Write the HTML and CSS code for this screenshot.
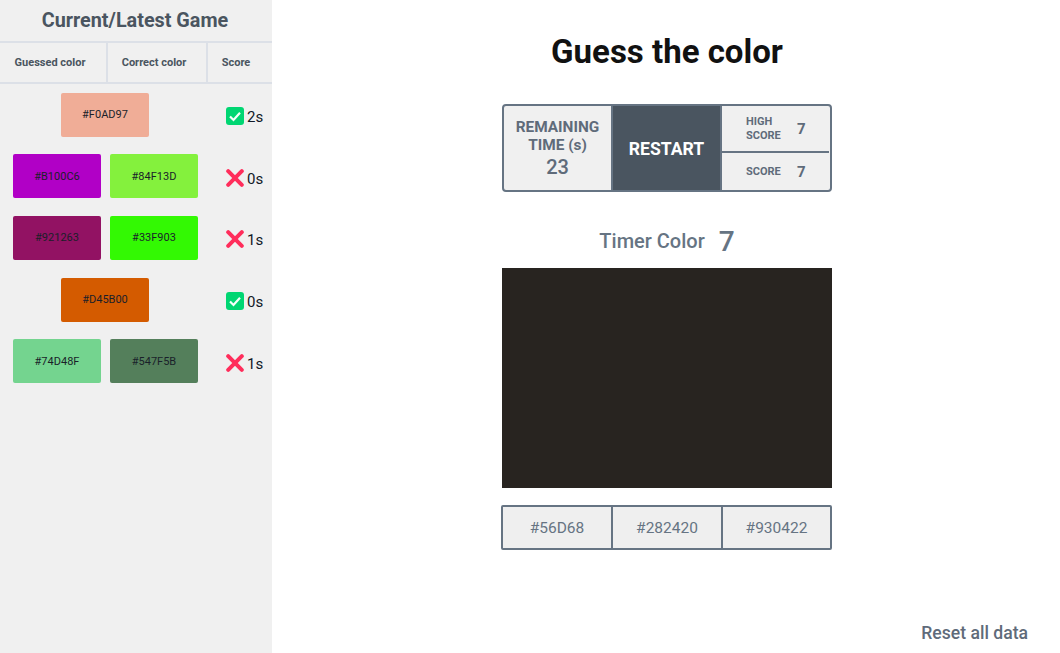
FILE: index.html
```html
<!DOCTYPE html>
<html lang="en">
<head>
<meta charset="utf-8">
<title>Guess the color</title>
<link rel="stylesheet" href="styles.css">
</head>
<body>
<div class="app">
  <aside class="sidebar">
    <h2 class="side-title">Current/Latest Game</h2>
    <div class="thead">
      <div class="th th-g">Guessed color</div>
      <div class="th th-c">Correct color</div>
      <div class="th th-s">Score</div>
    </div>
    <div class="rows">
      <div class="row">
        <div class="swatches"><div class="swatch" style="background:#F0AD97">#F0AD97</div></div>
        <div class="score"><svg class="icon" viewBox="0 0 18 18"><rect width="18" height="18" rx="3" fill="#00d672"/><path d="M4 9.5 7.5 13 14 5.8" fill="none" stroke="#f4fff9" stroke-width="2.2"/></svg><span class="secs">2s</span></div>
      </div>
      <div class="row">
        <div class="swatches"><div class="swatch" style="background:#B100C6">#B100C6</div><div class="swatch" style="background:#84F13D">#84F13D</div></div>
        <div class="score score-miss"><svg class="icon" viewBox="0 0 18 18"><path d="M2.2 2.2 15.8 15.8M15.8 2.2 2.2 15.8" fill="none" stroke="#ff2d5b" stroke-width="4" stroke-linecap="round"/></svg><span class="secs">0s</span></div>
      </div>
      <div class="row">
        <div class="swatches"><div class="swatch" style="background:#921263">#921263</div><div class="swatch" style="background:#33F903">#33F903</div></div>
        <div class="score score-miss"><svg class="icon" viewBox="0 0 18 18"><path d="M2.2 2.2 15.8 15.8M15.8 2.2 2.2 15.8" fill="none" stroke="#ff2d5b" stroke-width="4" stroke-linecap="round"/></svg><span class="secs">1s</span></div>
      </div>
      <div class="row">
        <div class="swatches"><div class="swatch" style="background:#D45B00">#D45B00</div></div>
        <div class="score"><svg class="icon" viewBox="0 0 18 18"><rect width="18" height="18" rx="3" fill="#00d672"/><path d="M4 9.5 7.5 13 14 5.8" fill="none" stroke="#f4fff9" stroke-width="2.2"/></svg><span class="secs">0s</span></div>
      </div>
      <div class="row">
        <div class="swatches"><div class="swatch" style="background:#74D48F">#74D48F</div><div class="swatch" style="background:#547F5B">#547F5B</div></div>
        <div class="score score-miss"><svg class="icon" viewBox="0 0 18 18"><path d="M2.2 2.2 15.8 15.8M15.8 2.2 2.2 15.8" fill="none" stroke="#ff2d5b" stroke-width="4" stroke-linecap="round"/></svg><span class="secs">1s</span></div>
      </div>
    </div>
  </aside>
  <main class="main">
    <h1 class="title">Guess the color</h1>
    <div class="panel">
      <div class="remaining">
        <div class="rem-label">REMAINING TIME (s)</div>
        <div class="rem-value">23</div>
      </div>
      <button class="restart">RESTART</button>
      <div class="scores">
        <div class="score-line score-line-high"><span class="score-label">HIGH SCORE</span><span class="score-value">7</span></div>
        <div class="score-line"><span class="score-label">SCORE</span><span class="score-value">7</span></div>
      </div>
    </div>
    <div class="timer"><span class="timer-label">Timer Color</span><span class="timer-value">7</span></div>
    <div class="color-box"></div>
    <div class="options">
      <button class="option option-a">#56D68</button>
      <button class="option option-b">#282420</button>
      <button class="option">#930422</button>
    </div>
    <div class="reset">Reset all data</div>
  </main>
</div>
</body>
</html>
```
FILE: styles.css
```css
* { box-sizing: border-box; }
html, body { margin: 0; height: 100%; }
body { font-family: Roboto, "Liberation Sans", sans-serif; background: #fff; overflow: hidden; }
.app { display: flex; width: 1060px; height: 653px; }

.sidebar { width: 272px; flex: none; background: #f0f0f0; }
.side-title { margin: 0; height: 41px; padding-right: 2px; font-size: 19.8px; line-height: 41px; font-weight: 700; text-align: center; color: #4a5560; }
.thead { display: flex; height: 43px; border-top: 2px solid #dce0e7; border-bottom: 2px solid #dce0e7; }
.th { display: flex; align-items: center; justify-content: center; font-size: 11px; font-weight: 700; color: #4a5560; }
.th-g { width: 108px; padding-right: 6px; border-right: 2px solid #dce0e7; }
.th-c { width: 100px; padding-right: 6px; border-right: 2px solid #dce0e7; }
.th-s { width: 56px; }
.rows { padding-top: 8.8px; }
.row { display: flex; align-items: center; height: 44px; margin-bottom: 17.6px; padding-left: 13px; }
.swatches { display: flex; justify-content: center; gap: 9px; width: 185px; }
.swatch { width: 88px; height: 44px; padding-top: 1px; border-radius: 2px; display: flex; align-items: center; justify-content: center; font-size: 11px; line-height: 14px; color: #1a1f2a; }
.swatch:only-child { margin-right: 1px; }
.score { display: flex; align-items: center; gap: 3px; margin-left: 28px; padding-top: 2px; font-size: 15px; color: #111827; }
.score-miss { padding-top: 3px; }
.secs { padding-top: 2px; }
.icon { width: 18px; height: 18px; flex: none; }

.main { flex: 1; position: relative; display: flex; flex-direction: column; align-items: center; padding-left: 2px; }
.title { margin: 32px 0 0; height: 40px; font-size: 33px; line-height: 40px; font-weight: 700; color: #111; }
.panel { display: flex; width: 330px; height: 88px; margin-top: 32px; background: #f0f0f0; border: 2px solid #667483; border-radius: 4px; }
.remaining { width: 107px; flex: none; padding-top: 12px; text-align: center; color: #5f6b7a; }
.rem-label { font-size: 15.4px; line-height: 18px; font-weight: 700; padding: 0 8px; }
.rem-value { font-size: 20px; line-height: 24px; font-weight: 500; margin-top: 1px; }
.restart { width: 111px; flex: none; border: 0; border-left: 2px solid #667483; border-right: 2px solid #667483; background: #4a5560; color: #fff; font: 700 17.6px Roboto, sans-serif; padding: 2px 0 0; }
.scores { flex: 1; display: flex; flex-direction: column; }
.score-line { flex: 1; display: flex; align-items: center; margin-right: 1px; padding-left: 24px; color: #5f6b7a; }
.score-line-high { flex: none; height: 45px; }
.score-line + .score-line { border-top: 2px solid #667483; }
.score-label { width: 35px; font-size: 11px; line-height: 14px; font-weight: 700; }
.score-value { font-size: 15px; font-weight: 700; margin-left: 16px; }
.timer { display: flex; align-items: center; height: 40px; margin-top: 29px; color: #667483; }
.timer-label { font-size: 20px; font-weight: 500; }
.timer-value { font-size: 28px; font-weight: 500; margin-left: 14px; }
.color-box { width: 330px; height: 220px; margin-top: 7px; background: #282420; }
.options { display: flex; width: 331px; height: 45px; margin-top: 17px; margin-right: 1px; background: #efefef; border: 2px solid #667483; border-radius: 2px; }
.option { flex: 1; border: 0; background: none; padding: 0; font: 400 15.5px Roboto, sans-serif; color: #667483; }
.option-a { flex: none; width: 108px; }
.option-b { flex: none; width: 110px; }
.option + .option { border-left: 2px solid #667483; }
.reset { position: absolute; right: 32px; top: 622px; font-size: 17.6px; line-height: 22px; font-weight: 500; color: #5f6b7a; }
```
